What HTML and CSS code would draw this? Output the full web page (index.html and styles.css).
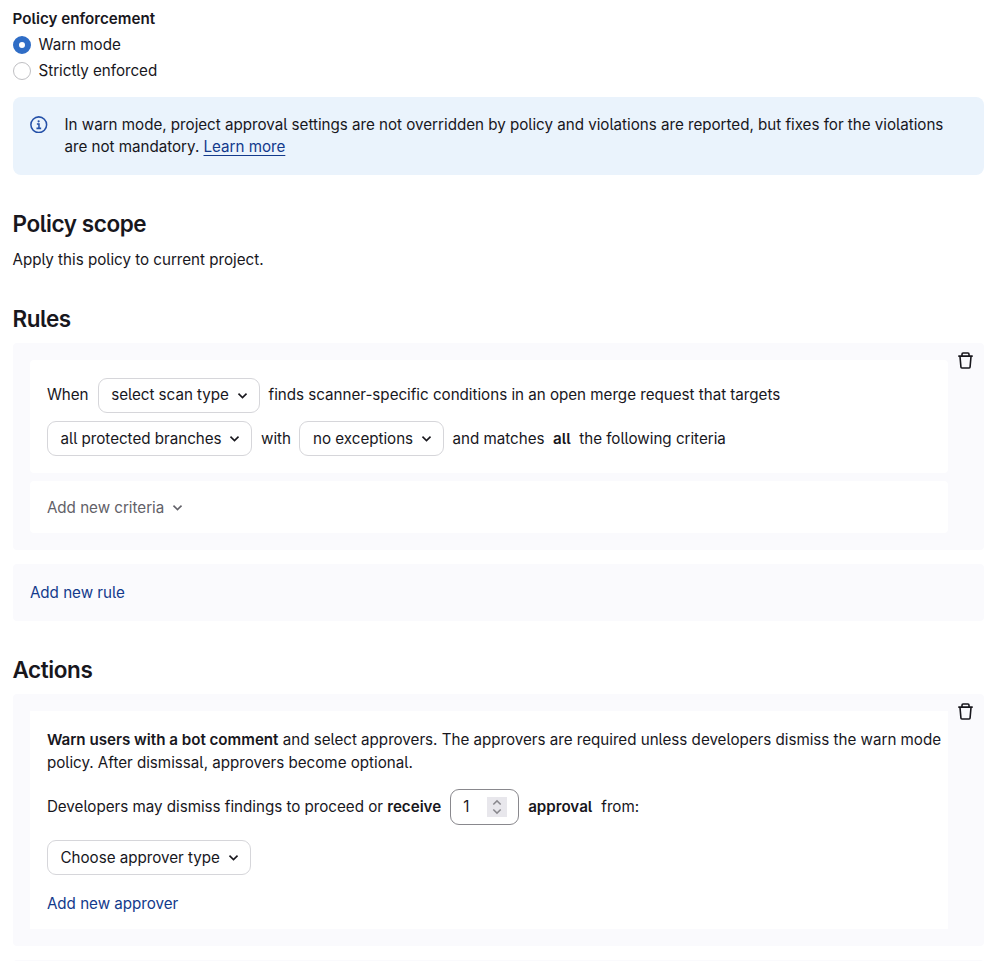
FILE: index.html
```
<!DOCTYPE html>
<html lang="en">
<head>
  <meta charset="UTF-8">
  <meta name="viewport" content="width=device-width, initial-scale=1.0">
  <title>Policy editor</title>
  <link rel="stylesheet" href="styles.css">
</head>
<body>
  <!-- Shared icons -->
  <svg class="sprite" width="0" height="0">
    <symbol id="chevron" viewBox="0 0 16 16"><path d="M4.2 6.2 8 9.9l3.8-3.7"/></symbol>
    <symbol id="trash" viewBox="0 0 16 16"><path d="M1.2 3.9h13.6M4.7 3.7V2c0-.6.4-1 1-1h4.6c.6 0 1 .4 1 1v1.7M2.8 4l.9 10.2c0 .5.4.9.9.9h6.8c.5 0 .9-.4.9-.9L13.2 4"/></symbol>
  </svg>

  <div class="enforcement">
    <div class="legend">Policy enforcement</div>
    <label class="radio"><input type="radio" name="enforcement" checked><span>Warn mode</span></label>
    <label class="radio"><input type="radio" name="enforcement"><span>Strictly enforced</span></label>
  </div>

  <div class="alert">
    <svg class="info" viewBox="0 0 16 16"><circle cx="8" cy="8" r="7.2"/><path d="M6.3 7.4h1.9v3.9M5.9 11.3h4.3"/><circle class="dot" cx="7.9" cy="4.9" r="1"/></svg>
    <p>In warn mode, project approval settings are not overridden by policy and violations are reported, but fixes for the violations are not mandatory. <a href="#">Learn more</a></p>
  </div>

  <section class="scope">
    <h2>Policy scope</h2>
    <p>Apply this policy to current project.</p>
  </section>

  <section class="rules">
    <h2>Rules</h2>
    <div class="panel">
      <div class="panel-main">
        <div class="card rule">
          <div class="row">
            <span>When</span>
            <button class="dropdown scan">select scan type <svg><use href="#chevron"/></svg></button>
            <span>finds scanner-specific conditions in an open merge request that targets</span>
          </div>
          <div class="row">
            <button class="dropdown branches">all protected branches <svg><use href="#chevron"/></svg></button>
            <span>with</span>
            <button class="dropdown exceptions">no exceptions <svg><use href="#chevron"/></svg></button>
            <span>and matches</span>
            <b>all</b>
            <span>the following criteria</span>
          </div>
        </div>
        <div class="card criteria">
          <button class="plain">Add new criteria <svg><use href="#chevron"/></svg></button>
        </div>
      </div>
      <button class="remove" aria-label="Remove"><svg><use href="#trash"/></svg></button>
    </div>
    <div class="panel add-rule"><button class="link">Add new rule</button></div>
  </section>

  <section class="actions">
    <h2>Actions</h2>
    <div class="panel">
      <div class="panel-main">
        <div class="card action">
          <p><b>Warn users with a bot comment</b> and select approvers. The approvers are required unless developers dismiss the warn mode policy. After dismissal, approvers become optional.</p>
          <div class="row approvals">
            <span>Developers may dismiss findings to proceed or <b>receive</b></span>
            <div class="number">
              <span>1</span>
              <svg class="spin" viewBox="0 0 20 20"><path d="M6.3 7.5 10 3.9l3.7 3.6M6.3 12.5l3.7 3.6 3.7-3.6"/></svg>
            </div>
            <b>approval</b>
            <span>from:</span>
          </div>
          <button class="dropdown approver">Choose approver type <svg><use href="#chevron"/></svg></button>
          <button class="link">Add new approver</button>
        </div>
      </div>
      <button class="remove" aria-label="Remove"><svg><use href="#trash"/></svg></button>
    </div>
    <div class="panel next"></div>
  </section>
</body>
</html>
```
FILE: styles.css
```
* { margin: 0; padding: 0; box-sizing: border-box; }
html { overflow: hidden; }
body {
  height: 961px;
  overflow: hidden;
  padding: 8px 15.4px 0 12.5px;
  background: #fff;
  color: #18171d;
  font-family: Inter, sans-serif;
  font-size: 15.2px;
  line-height: 22px;
  letter-spacing: -0.025px;
  font-feature-settings: "cv05";
}
button { font: inherit; font-feature-settings: inherit; letter-spacing: inherit; color: inherit; background: none; border: none; cursor: pointer; }
b { font-weight: 600; }
.sprite { display: block; }
svg { flex: none; fill: none; stroke: currentColor; stroke-width: 1.5; }

.legend { font-weight: 600; line-height: 22px; letter-spacing: 0; margin-bottom: 1.6px; }
.radio { display: flex; align-items: center; gap: 8px; height: 26px; }
.radio span { margin-top: 0; }
.radio input {
  appearance: none;
  width: 18px; height: 18px;
  border: 1px solid #bfbfc3;
  border-radius: 50%;
}
.radio input:checked { border: 6px solid #2f6dc6; }

.alert {
  display: flex;
  gap: 17px;
  height: 78px;
  margin-top: 13.4px;
  padding: 17px 17.5px;
  background: #eaf3fc;
  border-radius: 8px;
}
.alert .info { width: 17.5px; height: 17.5px; margin-top: 2px; color: #2450a8; stroke-width: 1.4; }
.info .dot { fill: currentColor; stroke: none; }
.alert a { color: #133a8c; text-decoration: underline; text-underline-offset: 3px; text-decoration-thickness: 1px; }

h2 { font-size: 22.5px; font-weight: 600; line-height: 28px; letter-spacing: -0.42px; }
.scope { padding-top: 35px; }
.scope p { margin-top: 11px; }
.rules { padding-top: 34px; }
.rules h2, .actions h2 { margin-bottom: 10.4px; }
.actions { padding-top: 35px; }

.panel { display: flex; background: #fafafd; border-radius: 4px; }
.panel-main { flex: 1; padding: 17px 0 17px 17.4px; }
.remove { width: 36px; height: 34px; display: flex; align-items: center; justify-content: center; }
.remove svg { width: 17px; height: 17px; }
.card { background: #fff; border-radius: 4px; padding: 17px; }
.row { display: flex; align-items: center; gap: 9px; white-space: nowrap; }
.rule { height: 112.4px; padding-top: 17.4px; }
.rule .row + .row { margin-top: 8.6px; gap: 8.5px; }
.criteria { height: 52px; margin-top: 8.6px; padding-top: 15.5px; }

.dropdown {
  display: flex;
  align-items: center;
  justify-content: space-between;
  height: 35px;
  padding: 0 8px 0 12.6px;
  border: 1px solid #d6d6da;
  border-radius: 9px;
  background: #fff;
}
.dropdown svg, .plain svg { width: 17px; height: 17px; }
.scan { width: 162px; }
.branches { width: 205.6px; }
.exceptions { width: 144.6px; }
.approver { width: 204px; }
.plain { display: flex; align-items: center; gap: 5px; color: #626168; }

.add-rule { height: 56.5px; margin-top: 14px; padding: 1px 17.4px 0; }
.link { color: #133a8c; }

.action { height: 218px; border-radius: 0; padding-right: 0; }
.action p { line-height: 22.4px; margin-top: 1px; }
.approvals { margin: 14.8px 0 15.2px; }
.number {
  display: flex;
  align-items: center;
  justify-content: space-between;
  width: 69px; height: 36px;
  padding: 0 11px 0 12px;
  border: 1px solid #89888d;
  border-radius: 9px;
}
.spin { width: 20px; height: 20px; background: #e8e7ec; color: #89888d; }
.action .link { display: block; margin-top: 17.6px; }
.next { height: 20px; margin-top: 14px; }
```
